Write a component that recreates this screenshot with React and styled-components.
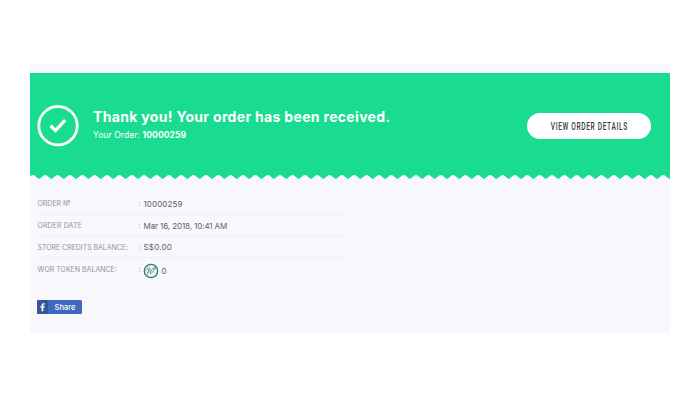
import styled, { createGlobalStyle } from 'styled-components'

const GlobalStyle = createGlobalStyle`
  * {
    box-sizing: border-box;
  }
  body {
    margin: 0;
    background: #fff;
    font-family: Inter, "Liberation Sans", sans-serif;
  }
`

const WAVE_STEP = 12.36

const getWavePath = () => {
  let d = 'M0 0V1.2'
  for (let x = 2.9; x < 655; x += WAVE_STEP) {
    d += `L${x - 6.18} 4.6Q${x - 5.4} 4.8 ${x - 4.4} 3.8L${x - 1.2} 1.3Q${x} .6 ${x + 1.2} 1.3L${x + 4.4} 3.8Q${x + 5.4} 4.8 ${x + 6.18} 4.6`
  }
  return `${d}V0Z`
}

const orderRows = [
  { label: 'ORDER №', value: '10000259', spacing: 0, valueSpacing: 0.1 },
  { label: 'ORDER DATE', value: 'Mar 16, 2018, 10:41 AM', spacing: 0.1, valueSpacing: -0.1 },
  { label: 'STORE CREDITS BALANCE:', value: 'S$0.00', spacing: -0.04, valueSpacing: 0.2 },
  { label: 'WOR TOKEN BALANCE:', value: '0', spacing: 0, token: true },
]

const WorToken = () => (
  <TokenIcon viewBox="0 0 16 16">
    <circle cx="8" cy="8" r="6.7" fill="#f1f6f4" stroke="#32796a" strokeWidth="1.3" />
    <circle cx="8" cy="8" r="5.7" fill="none" stroke="#b4cfc7" strokeWidth=".5" />
    <path
      d="M3.6 7C4.8 4.6 6.6 3.6 6.3 5.6L4.5 11.2M5.2 9.4C6.6 7 8.6 5.4 8.3 7.2L7.4 10.2C7.4 11.9 9.8 9.4 11.1 6.2C11.8 4.2 13 4.3 12.3 5.9M9.2 6.2C10.3 5.1 11.3 4.5 12.2 4.2"
      fill="none"
      stroke="#4b9180"
      strokeWidth=".9"
      strokeLinecap="round"
    />
  </TokenIcon>
)

const App = () => {
  return (
    <>
      <GlobalStyle />
      <Page>
        <Banner>
          <CheckIcon viewBox="0 0 42 42">
            <circle cx="21" cy="20.7" r="19.2" />
            <path d="M13.5 20.8L18.5 25.4L28.2 15.2" strokeWidth="3.2" />
          </CheckIcon>
          <Message>
            <Title>Thank you! Your order has been received.</Title>
            <SubTitle>
              Your Order: <b>10000259</b>
            </SubTitle>
          </Message>
          <DetailsButton>
            <span>VIEW ORDER DETAILS</span>
          </DetailsButton>
        </Banner>
        <Wave viewBox="0 0 640 6">
          <path d={getWavePath()} fill="#19dc91" />
        </Wave>
        <OrderTable>
          {orderRows.map((row) => (
            <OrderRow key={row.label} $token={row.token}>
              <Label $spacing={row.spacing}>{row.label}</Label>
              <Colon>:</Colon>
              {row.token && <WorToken />}
              <Value $spacing={row.valueSpacing}>{row.value}</Value>
            </OrderRow>
          ))}
        </OrderTable>
        <ShareButton>
          <ShareIcon viewBox="0 0 11 14">
            <path
              d="M4.6 11.2V7.8H3.4V6.2H4.6V5.2C4.6 3.9 5.4 3.2 6.6 3.2H7.7V4.6H7C6.4 4.6 6.3 4.9 6.3 5.3V6.2H7.7L7.5 7.8H6.3V11.2Z"
              fill="#fff"
            />
          </ShareIcon>
          <ShareText>Share</ShareText>
        </ShareButton>
      </Page>
    </>
  )
}

const Page = styled.main`
  width: 640px;
  height: 269px;
  margin: 64px 30px 0;
  padding-top: 9px;
  background: #f7f7fc;
  overflow: hidden;
`

const Banner = styled.section`
  height: 101px;
  padding: 4px 19px 0 7px;
  display: flex;
  align-items: center;
  background: #19dc91;
`

const CheckIcon = styled.svg`
  width: 42px;
  height: 42px;
  flex: none;
  fill: none;
  stroke: #fff;

  circle {
    stroke-width: 2.8;
  }
`

const Message = styled.div`
  margin: -2px 0 0 14px;
  flex: 1;
  color: #fff;
  white-space: nowrap;
`

const Title = styled.h1`
  margin: 0;
  font-size: 14px;
  line-height: 18px;
  font-weight: 700;
  letter-spacing: 0.32px;
`

const SubTitle = styled.p`
  margin: 2px 0 0;
  font-size: 8.5px;
  line-height: 14px;
  letter-spacing: 0.08px;
`

const DetailsButton = styled.button`
  width: 124px;
  height: 26px;
  padding: 0;
  border: 0;
  border-radius: 13px;
  background: #fff;
  color: #343a43;
  font: 500 11.8px Roboto, sans-serif;
  display: flex;
  align-items: center;
  justify-content: center;
  span {
    white-space: nowrap;
    letter-spacing: 1.2px;
    transform: scaleX(0.555);
  }
`

const Wave = styled.svg`
  display: block;
  width: 640px;
  height: 6px;
`

const OrderTable = styled.div`
  width: 306px;
  margin: 13px 0 0 7.5px;
`

const OrderRow = styled.div`
  height: ${({ $token }) => ($token ? '26px' : '21.8px')};
  display: flex;
  align-items: center;
  border-bottom: ${({ $token }) => ($token ? '0' : '1px solid #efeff4')};

  > span {
    margin-top: ${({ $token }) => ($token ? '-4px' : '1px')};
  }
  > span:last-child {
    margin-top: ${({ $token }) => ($token ? '0' : '1px')};
  }
`

const Label = styled.span`
  width: 101px;
  font-size: 7px;
  letter-spacing: ${({ $spacing }) => $spacing}px;
  color: #94949b;
  white-space: nowrap;
`

const Colon = styled.span`
  width: 5px;
  font-size: 7px;
  color: #a5a5ab;
`

const Value = styled.span`
  font-size: 8px;
  letter-spacing: ${({ $spacing }) => $spacing || 0}px;
  color: #5f5f66;
  white-space: nowrap;
`

const TokenIcon = styled.svg`
  width: 16px;
  height: 16px;
  margin: 0 3px 0 -1px;
`

const ShareButton = styled.button`
  width: 45px;
  height: 14px;
  margin: 16px 0 0 7px;
  padding: 0;
  border: 0;
  border-radius: 1.5px;
  display: flex;
  overflow: hidden;
  background: #4069bd;
  color: #fff;
`

const ShareIcon = styled.svg`
  width: 11px;
  height: 14px;
  background: #35559b;
`

const ShareText = styled.span`
  flex: 1;
  font: 500 7.5px/15px Inter, sans-serif;
  text-align: center;
`

export default App
